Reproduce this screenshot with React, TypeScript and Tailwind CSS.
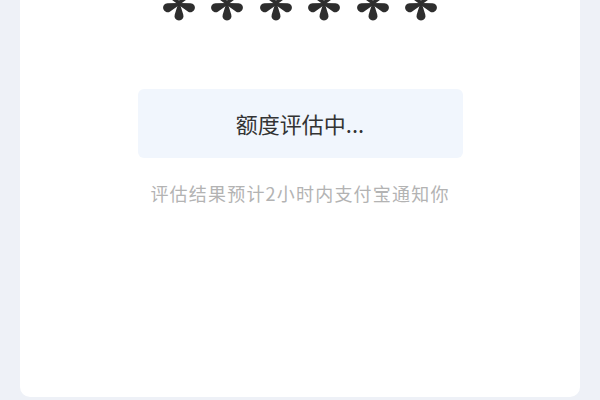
import React from 'react';

// one masked digit: five teardrop petals, one pointing straight down
const MaskStar: React.FC = () => (
  <svg width="40" height="40" viewBox="-20 -20 40 40" className="shrink-0">
    {[0, 72, 144, 216, 288].map((a) => (
      <path
        key={a}
        transform={`rotate(${a})`}
        d="M -1 0 L -4.3 10.7 A 4.5 4.5 0 1 0 4.3 10.7 L 1 0 Z"
        fill="#2e2e2e"
      />
    ))}
  </svg>
);

export default function App() {
  return (
    <div className="w-[600px] h-[400px] bg-[#eef1f7] px-[20px] overflow-hidden">
      <div className="h-[397px] bg-white rounded-b-[10px] flex flex-col items-center">
        <div className="flex -mt-[16px] gap-[8.5px] h-[40px]">
          {Array.from({ length: 6 }).map((_, i) => (
            <MaskStar key={i} />
          ))}
        </div>

        <div className="mt-[65px] w-[325px] h-[69px] rounded-[6px] bg-[#f1f6fd] flex items-center justify-center">
          <span className="text-[22px] text-[#333333]" style={{ fontFamily: '"Noto Sans CJK SC", sans-serif' }}>
            额度评估中...
          </span>
        </div>

        <p
          className="mt-[22px] text-[18px] leading-[26px] tracking-[1.2px] text-[#b3b3b3]"
          style={{ fontFamily: '"Noto Sans CJK SC", sans-serif' }}
        >
          评估结果预计2小时内支付宝通知你
        </p>
      </div>
    </div>
  );
}
